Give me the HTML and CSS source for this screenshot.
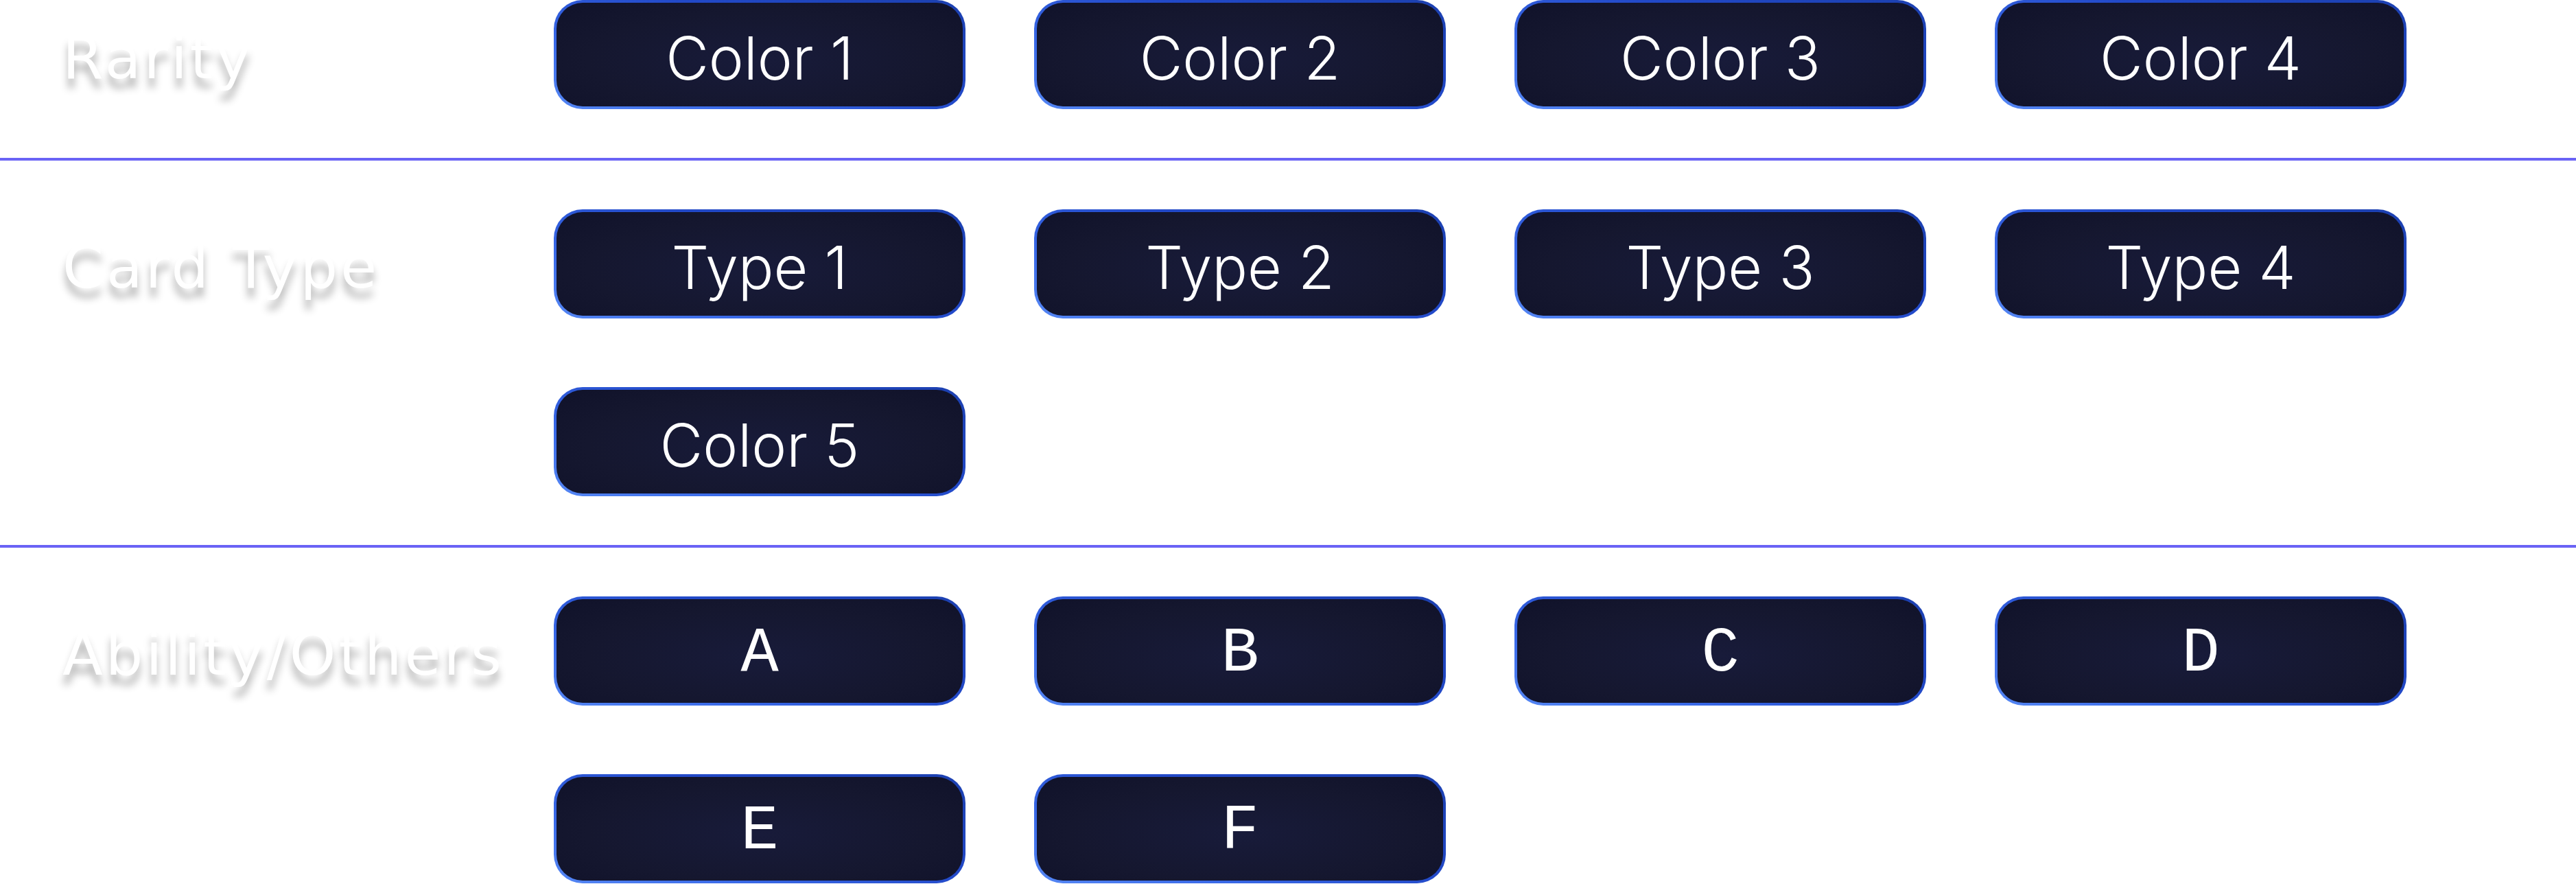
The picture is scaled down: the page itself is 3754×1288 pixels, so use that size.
FILE: index.html
```html
<!DOCTYPE html>
<html lang="en">
<head>
<meta charset="utf-8">
<title>Filters</title>
<link rel="stylesheet" href="styles.css">
</head>
<body>
  <div class="filters">
    <section class="group group-first">
      <div class="label">Rarity</div>
      <div class="options">
        <button class="chip">Color 1</button>
        <button class="chip">Color 2</button>
        <button class="chip">Color 3</button>
        <button class="chip">Color 4</button>
      </div>
    </section>
    <hr class="divider">
    <section class="group">
      <div class="label">Card Type</div>
      <div class="options">
        <button class="chip">Type 1</button>
        <button class="chip">Type 2</button>
        <button class="chip">Type 3</button>
        <button class="chip">Type 4</button>
        <button class="chip">Color 5</button>
      </div>
    </section>
    <hr class="divider">
    <section class="group">
      <div class="label">Ability/Others</div>
      <div class="options">
        <button class="chip mono">A</button>
        <button class="chip mono">B</button>
        <button class="chip mono">C</button>
        <button class="chip mono">D</button>
        <button class="chip mono">E</button>
        <button class="chip mono">F</button>
      </div>
    </section>
  </div>
</body>
</html>
```

FILE: styles.css
```css
html, body {
  margin: 0;
  padding: 0;
  background: #ffffff;
}

.filters {
  display: flex;
  flex-direction: column;
}

.group {
  display: grid;
  grid-template-columns: 716px 1fr;
  align-items: start;
  padding: 71px 0 71px 91px;
}

.group-first {
  padding-top: 0;
}

.label {
  box-sizing: border-box;
  height: 159px;
  padding-top: 10px;
  font-family: "DejaVu Sans", sans-serif;
  font-size: 86px;
  line-height: 149px;
  letter-spacing: 4px;
  color: #ffffff;
  text-shadow: 0 14px 12px rgba(0, 0, 0, 0.3);
  white-space: nowrap;
}

.options {
  display: grid;
  grid-template-columns: repeat(4, 600px);
  grid-auto-rows: 159px;
  column-gap: 100px;
  row-gap: 100px;
}

.chip {
  box-sizing: border-box;
  width: 600px;
  height: 159px;
  margin: 0;
  padding: 11px 0 0 0;
  display: flex;
  align-items: center;
  justify-content: center;
  border: 4px solid transparent;
  border-radius: 42px;
  background:
    radial-gradient(ellipse at 50% 55%, #181b3a 0%, #15172f 60%, #10122a 100%) padding-box,
    linear-gradient(200deg, #1c40b0 0%, #2249c8 40%, #3a6ae8 75%, #5587f4 100%) border-box;
  color: #ffffff;
  font-family: "Inter", "Roboto", sans-serif;
  font-size: 86px;
  font-weight: 300;
  line-height: 1.21;
  cursor: pointer;
}

.chip.mono {
  font-family: "Liberation Mono", "DejaVu Sans Mono", monospace;
  font-size: 92px;
  font-weight: 400;
  padding-top: 9px;
}

.divider {
  margin: 0;
  border: 0;
  height: 4px;
  background: #6a63f5;
}
```
